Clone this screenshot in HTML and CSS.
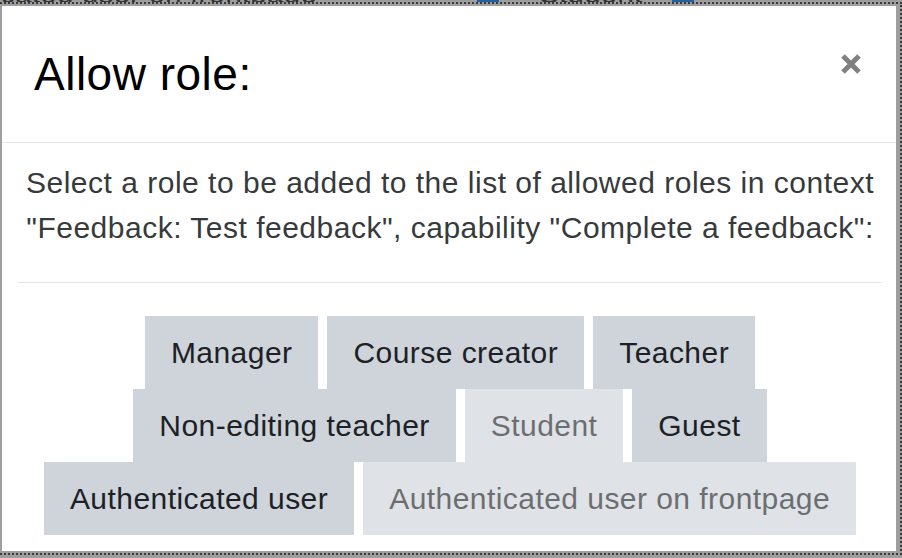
FILE: index.html
```html
<!DOCTYPE html>
<html lang="en">
<head>
  <meta charset="UTF-8">
  <meta name="viewport" content="width=device-width, initial-scale=1.0">
  <title>Allow role</title>
  <link rel="stylesheet" href="styles.css">
</head>
<body>
  <div class="behind">
    <span class="behind-text">cated user on frontpage</span>
    <span class="behind-icon"></span>
    <span class="behind-text behind-student">Student</span>
    <span class="behind-icon"></span>
  </div>
  <div class="selection">
    <div class="modal">
      <div class="modal-header">
        <h1 class="modal-title">Allow role:</h1>
        <button class="close" aria-label="Close">
          <svg width="22" height="22" viewBox="0 0 22 22">
            <path d="M3 3 L19 19 M19 3 L3 19" stroke="#808080" stroke-width="5" fill="none"/>
          </svg>
        </button>
      </div>
      <div class="modal-body">
        <p class="intro">Select a role to be added to the list of allowed roles in context "Feedback: Test feedback", capability "Complete a feedback":</p>
        <hr class="divider">
        <div class="roles">
          <button class="role">Manager</button>
          <button class="role">Course creator</button>
          <button class="role">Teacher</button>
          <button class="role">Non-editing teacher</button>
          <button class="role" disabled>Student</button>
          <button class="role">Guest</button>
          <button class="role">Authenticated user</button>
          <button class="role" disabled>Authenticated user on frontpage</button>
        </div>
      </div>
    </div>
  </div>
</body>
</html>
```

FILE: styles.css
```css
body {
  margin: 0;
  height: 558px;
  overflow: hidden;
  background-color: #9e9e9e;
  font-family: "Liberation Sans", Arial, sans-serif;
}

.behind {
  display: flex;
  align-items: flex-end;
  height: 2px;
  overflow: hidden;
}
.behind-text {
  font-size: 30px;
  line-height: 30px;
  margin-bottom: -6px;
  color: #333;
}
.behind-student {
  margin-left: 40px;
}
.behind-icon {
  width: 22px;
  height: 4px;
  margin-left: 160px;
  background-color: #1f5fa0;
}
.behind-icon:last-child {
  margin-left: 30px;
}

.selection {
  border: 2px dotted #3a3a3a;
  border-left: none;
  padding: 2px 4px 2px 2px;
}

.modal {
  background-color: #fff;
  height: 545px;
  overflow: hidden;
}

.modal-header {
  display: flex;
  justify-content: space-between;
  align-items: flex-start;
  padding: 41px 34px 40px 32px;
  border-bottom: 1px solid #e6e6e6;
}
.modal-title {
  margin: 0;
  font-size: 46px;
  font-weight: normal;
  line-height: 55px;
  letter-spacing: 0.5px;
  color: #000;
}
.close {
  background: none;
  border: none;
  padding: 0;
  margin-top: 6px;
  width: 22px;
  height: 22px;
  cursor: pointer;
}
.close svg {
  display: block;
}

.modal-body {
  padding: 17px 14px 0 16px;
}
.intro {
  margin: 0 6px;
  font-size: 30px;
  line-height: 45px;
  letter-spacing: 0.5px;
  color: #373a3c;
  text-align: center;
}
.divider {
  border: none;
  border-top: 1px solid #e2e2e2;
  margin: 32px 0 33px;
}

.roles {
  display: flex;
  flex-wrap: wrap;
  justify-content: center;
  column-gap: 9px;
}
.role {
  background-color: #ced4da;
  color: #1d2125;
  border: none;
  border-radius: 0;
  padding: 14px 26px;
  font-family: "Liberation Sans", Arial, sans-serif;
  font-size: 30px;
  line-height: 45px;
  letter-spacing: 0.45px;
  cursor: pointer;
}
.role:disabled {
  opacity: 0.65;
  cursor: default;
}
```
